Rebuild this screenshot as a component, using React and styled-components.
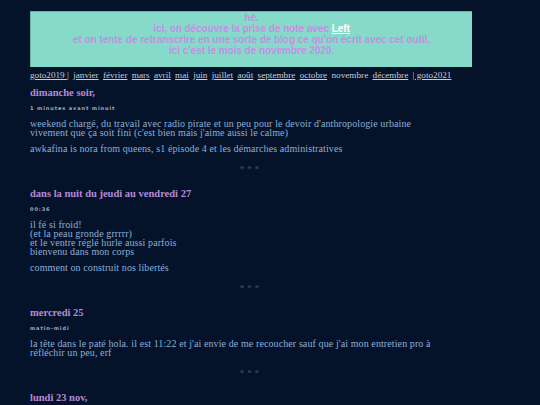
import React from "react";
import styled, { createGlobalStyle } from "styled-components";

const Global = createGlobalStyle`
  html, body { margin: 0; padding: 0; background: #04132a; }
  body { font-family: "Liberation Serif", "Times New Roman", serif; }
`;

const Page = styled.div`
  width: 442px;
  margin-left: 30px;
  padding-top: 11px;
`;

const Banner = styled.header`
  background: #86dac9;
  border-left: 1px solid #5fb7a6;
  border-top: 1px solid #5fb7a6;
  font-family: "Liberation Sans", Arial, sans-serif;
  font-size: 10px;
  font-weight: bold;
  letter-spacing: -0.04px;
  line-height: 11px;
  color: #c48fe3;
  text-align: center;
  padding: 0 0 11px;
  height: 44px;
`;

const BannerLink = styled.a`
  color: #ffffff;
  text-decoration: underline;
`;

const Nav = styled.nav`
  margin-top: 2px;
  font-size: 9.2px;
  line-height: 12px;
  color: #c9ccd6;
  white-space: nowrap;
  display: flex;
  gap: 4.3px;
`;

const NavLink = styled.a`
  color: #c9ccd6;
  text-decoration: ${(p) => (p.$current ? "none" : "underline")};
`;

const Entry = styled.article`
  display: flex;
  flex-direction: column;
`;

const Title = styled.h2`
  margin: 0;
  font-size: 10.5px;
  font-weight: bold;
  line-height: 14px;
  color: #b48ad6;
`;

const Time = styled.div`
  font-family: "DejaVu Sans", sans-serif;
  font-size: 5px;
  font-weight: bold;
  letter-spacing: 0.9px;
  color: #a6adb8;
  margin-top: 5px;
  line-height: 6px;
`;

const Body = styled.div`
  margin-top: 8px;
  font-size: 10px;
  line-height: 9px;
  color: #8eaed7;
  letter-spacing: 0.1px;
`;

const Para = styled.p`
  margin: 0 0 7px;
  &:last-child { margin-bottom: 0; }
`;

const Sep = styled.div`
  text-align: center;
  font-size: 9px;
  line-height: 9px;
  color: #2b4765;
  letter-spacing: 3px;
  margin: 12px 0 13px;
  font-weight: bold;
`;

const Spacer = styled.div`
  height: 5px;
`;

const months = [
  "janvier", "février", "mars", "avril", "mai", "juin", "juillet",
  "août", "septembre", "octobre", "novembre", "décembre",
];

const entries = [
  {
    title: "dimanche soir,",
    time: "1 minutes avant minuit",
    paras: [
      ["weekend chargé, du travail avec radio pirate et un peu pour le devoir d'anthropologie urbaine", "vivement que ça soit fini (c'est bien mais j'aime aussi le calme)"],
      ["awkafina is nora from queens, s1 épisode 4 et les démarches administratives"],
    ],
  },
  {
    title: "dans la nuit du jeudi au vendredi 27",
    time: "00:36",
    paras: [
      ["il fé si froid!", "(et la peau gronde grrrrr)", "et le ventre réglé hurle aussi parfois", "bienvenu dans mon corps"],
      ["comment on construit nos libertés"],
    ],
  },
  {
    title: "mercredi 25",
    time: "matin-midi",
    paras: [
      ["la tête dans le paté hola. il est 11:22 et j'ai envie de me recoucher sauf que j'ai mon entretien pro à", "réfléchir un peu, erf"],
    ],
  },
];

export default function App() {
  return (
    <>
      <Global />
      <Page>
        <Banner>
          hé.<br />
          ici, on découvre la prise de note avec <BannerLink href="#">Left</BannerLink><br />
          et on tente de retranscrire en une sorte de blog ce qu'on écrit avec cet outil.<br />
          ici c'est le mois de novembre 2020.
        </Banner>
        <Nav>
          <NavLink href="#">goto2019 |</NavLink>
          {months.map((m) => (
            <NavLink key={m} href="#" $current={m === "novembre"}>{m}</NavLink>
          ))}
          <NavLink href="#">| goto2021</NavLink>
        </Nav>
        <Spacer />
        {entries.map((e) => (
          <Entry key={e.title}>
            <Title>{e.title}</Title>
            <Time>{e.time}</Time>
            <Body>
              {e.paras.map((p, i) => (
                <Para key={i}>
                  {p.map((l, j) => (
                    <React.Fragment key={j}>{l}{j < p.length - 1 && <br />}</React.Fragment>
                  ))}
                </Para>
              ))}
            </Body>
            <Sep>***</Sep>
          </Entry>
        ))}
        <Entry>
          <Title>lundi 23 nov,</Title>
        </Entry>
      </Page>
    </>
  );
}
